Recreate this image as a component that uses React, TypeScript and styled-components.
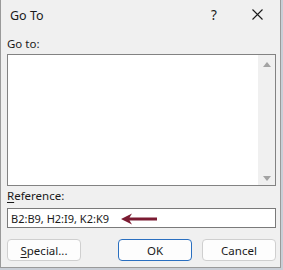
import styled, { createGlobalStyle } from "styled-components"

const GlobalStyle = createGlobalStyle`
    html, body {
        margin: 0;
        padding: 0;
        background: #c9ced6;
    }
    body {
        font-family: "Segoe UI", "Noto Sans", "Open Sans", sans-serif;
        color: #1a1a1a;
    }
`

export default function App(){
    return(
        <>
            <GlobalStyle/>
            <Dialog>
                <TitleBar>
                    <Title>Go To</Title>
                    <HelpButton>?</HelpButton>
                    <CloseButton>
                        <svg width="11" height="11" viewBox="0 0 11 11">
                            <path d="M0.5 0.5 L10.5 10.5 M10.5 0.5 L0.5 10.5" stroke="#1a1a1a" strokeWidth="1.1" fill="none"/>
                        </svg>
                    </CloseButton>
                </TitleBar>
                <Body>
                    <Label>Go to:</Label>
                    <ListBox>
                        <ListItems/>
                        <ScrollBar>
                            <ScrollArrow $dir="up"/>
                            <ScrollArrow $dir="down"/>
                        </ScrollBar>
                    </ListBox>
                    <Label $top={2}><u>R</u>eference:</Label>
                    <InputBox>
                        <InputText>B2:B9, H2:I9, K2:K9</InputText>
                        <Arrow width="37" height="12" viewBox="0 0 37 12">
                            <path d="M0 6 L11 0.5 L8.5 4.6 L36 4.6 L36 7.4 L8.5 7.4 L11 11.5 Z" fill="#7b1b32"/>
                        </Arrow>
                    </InputBox>
                    <ButtonRow>
                        <Button><u>S</u>pecial...</Button>
                        <RightButtons>
                            <Button $primary>OK</Button>
                            <Button>Cancel</Button>
                        </RightButtons>
                    </ButtonRow>
                </Body>
            </Dialog>
        </>
    )
}

const Dialog = styled.div`
    width: 281px;
    height: 268px;
    box-sizing: border-box;
    background: #f0f0f0;
    border: 1px solid #9a9a9a;
    border-top: none;
    display: flex;
    flex-direction: column;
`

const TitleBar = styled.div`
    height: 31px;
    display: flex;
    align-items: center;
    padding-left: 9px;
`

const Title = styled.div`
    flex: 1;
    font-size: 12.5px;
    margin-top: -1px;
`

const HelpButton = styled.div`
    width: 14px;
    font-size: 13.5px;
    margin-right: 27px;
    margin-top: -1px;
`

const CloseButton = styled.div`
    width: 11px;
    height: 11px;
    margin-right: 17px;
    margin-top: -2px;
    display: flex;
`

const Body = styled.div`
    padding: 0 4px 0 6px;
    display: flex;
    flex-direction: column;
`

const Label = styled.div<{ $top?: number }>`
    font-size: 11.5px;
    line-height: 16px;
    height: 17px;
    margin-top: ${p => p.$top ?? 5}px;
    margin-bottom: ${p => p.$top ? 3 : 1}px;
    u {
        text-decoration-thickness: 1px;
        text-underline-offset: 2px;
    }
`

const ListBox = styled.div`
    height: 132px;
    width: 269px;
    box-sizing: border-box;
    border: 1px solid #828282;
    background: #ffffff;
    display: flex;
`

const ListItems = styled.div`
    flex: 1;
`

const ScrollBar = styled.div`
    width: 17px;
    background: #f0f0f0;
    display: flex;
    flex-direction: column;
    justify-content: space-between;
    align-items: center;
    padding: 7px 0 4px;
`

const ScrollArrow = styled.div<{ $dir: "up" | "down" }>`
    width: 0;
    height: 0;
    border-left: 4.5px solid transparent;
    border-right: 4.5px solid transparent;
    ${p => p.$dir === "up"
        ? "border-bottom: 5px solid #a3a3a3;"
        : "border-top: 5px solid #a3a3a3;"}
`

const InputBox = styled.div`
    width: 269px;
    height: 20px;
    box-sizing: border-box;
    border: 1px solid #7a7a7a;
    background: #ffffff;
    display: flex;
    align-items: center;
    padding-left: 3px;
`

const InputText = styled.span`
    font-size: 11px;
`

const Arrow = styled.svg`
    margin-left: 12px;
    margin-top: 1px;
`

const ButtonRow = styled.div`
    margin-top: 11px;
    width: 269px;
    display: flex;
    justify-content: space-between;
`

const RightButtons = styled.div`
    display: flex;
    gap: 10px;
`

const Button = styled.div<{ $primary?: boolean }>`
    width: 74px;
    height: 22px;
    box-sizing: border-box;
    border: 1px solid ${p => p.$primary ? "#2a6fc0" : "#cfcfcf"};
    border-radius: 4px;
    background: #fdfdfd;
    display: flex;
    align-items: center;
    justify-content: center;
    font-size: 11.5px;
    u {
        text-decoration-thickness: 1px;
        text-underline-offset: 2px;
    }
`
